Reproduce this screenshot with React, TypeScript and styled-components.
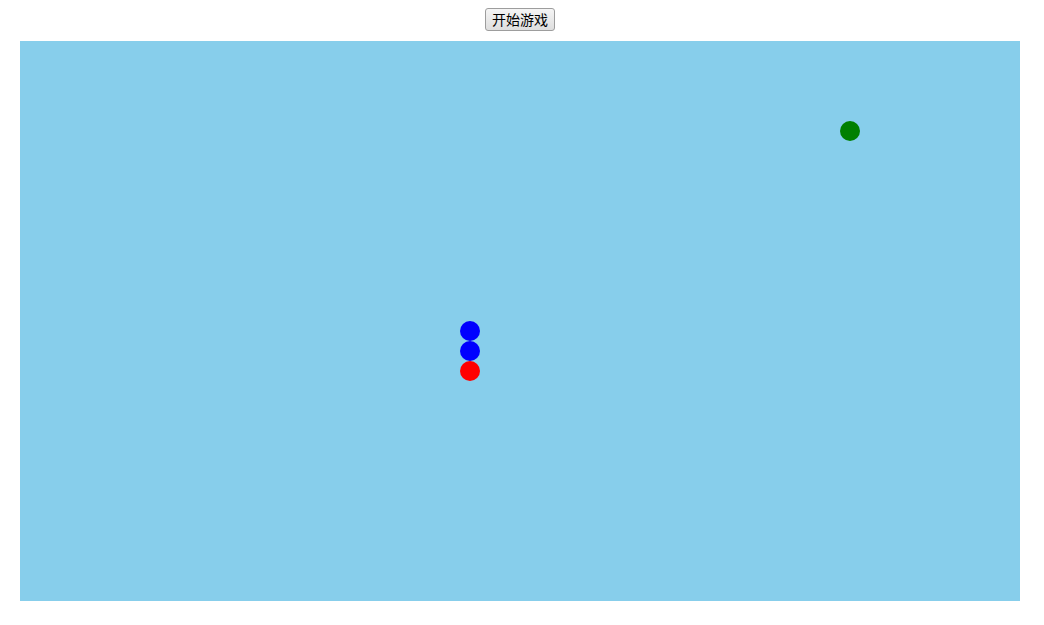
import React from "react";
import styled, { createGlobalStyle } from "styled-components";

const Global = createGlobalStyle`
  html, body { margin: 0; padding: 0; background: #ffffff; }
  body { font-family: "Noto Sans CJK SC", "Liberation Sans", sans-serif; }
`;

const Page = styled.div`
  display: flex;
  flex-direction: column;
  padding-top: 8px;
`;

const Toolbar = styled.div`
  display: flex;
  justify-content: center;
  height: 23px;
  padding-right: 4px;
`;

const StartButton = styled.button`
  box-sizing: border-box;
  width: 70px;
  height: 23px;
  padding: 0;
  font-family: "Noto Sans CJK SC", "Liberation Sans", sans-serif;
  font-size: 14px;
  line-height: 21px;
  color: #000;
  background: linear-gradient(#f5f5f5, #dedede);
  border: 1px solid #9d9d9d;
  border-radius: 3px;
  cursor: pointer;
`;

const Board = styled.div`
  position: relative;
  width: 1000px;
  height: 560px;
  margin: 10px 0 0 20px;
  background: #87ceeb;
`;

const CELL = 20;

const Dot = styled.div<{ $color: string }>`
  position: absolute;
  width: ${CELL}px;
  height: ${CELL}px;
  border-radius: 50%;
  background: ${(p) => p.$color};
`;

const snake = [
  { x: 22, y: 14, color: "#0000ff" },
  { x: 22, y: 15, color: "#0000ff" },
  { x: 22, y: 16, color: "#ff0000" },
];
const food = { x: 41, y: 4, color: "#008000" };

export default function App() {
  const pieces = [...snake, food];
  return (
    <Page>
      <Global />
      <Toolbar>
        <StartButton>开始游戏</StartButton>
      </Toolbar>
      <Board>
        {pieces.map((p, i) => (
          <Dot
            key={i}
            $color={p.color}
            style={{ left: p.x * CELL, top: p.y * CELL }}
          />
        ))}
      </Board>
    </Page>
  );
}
